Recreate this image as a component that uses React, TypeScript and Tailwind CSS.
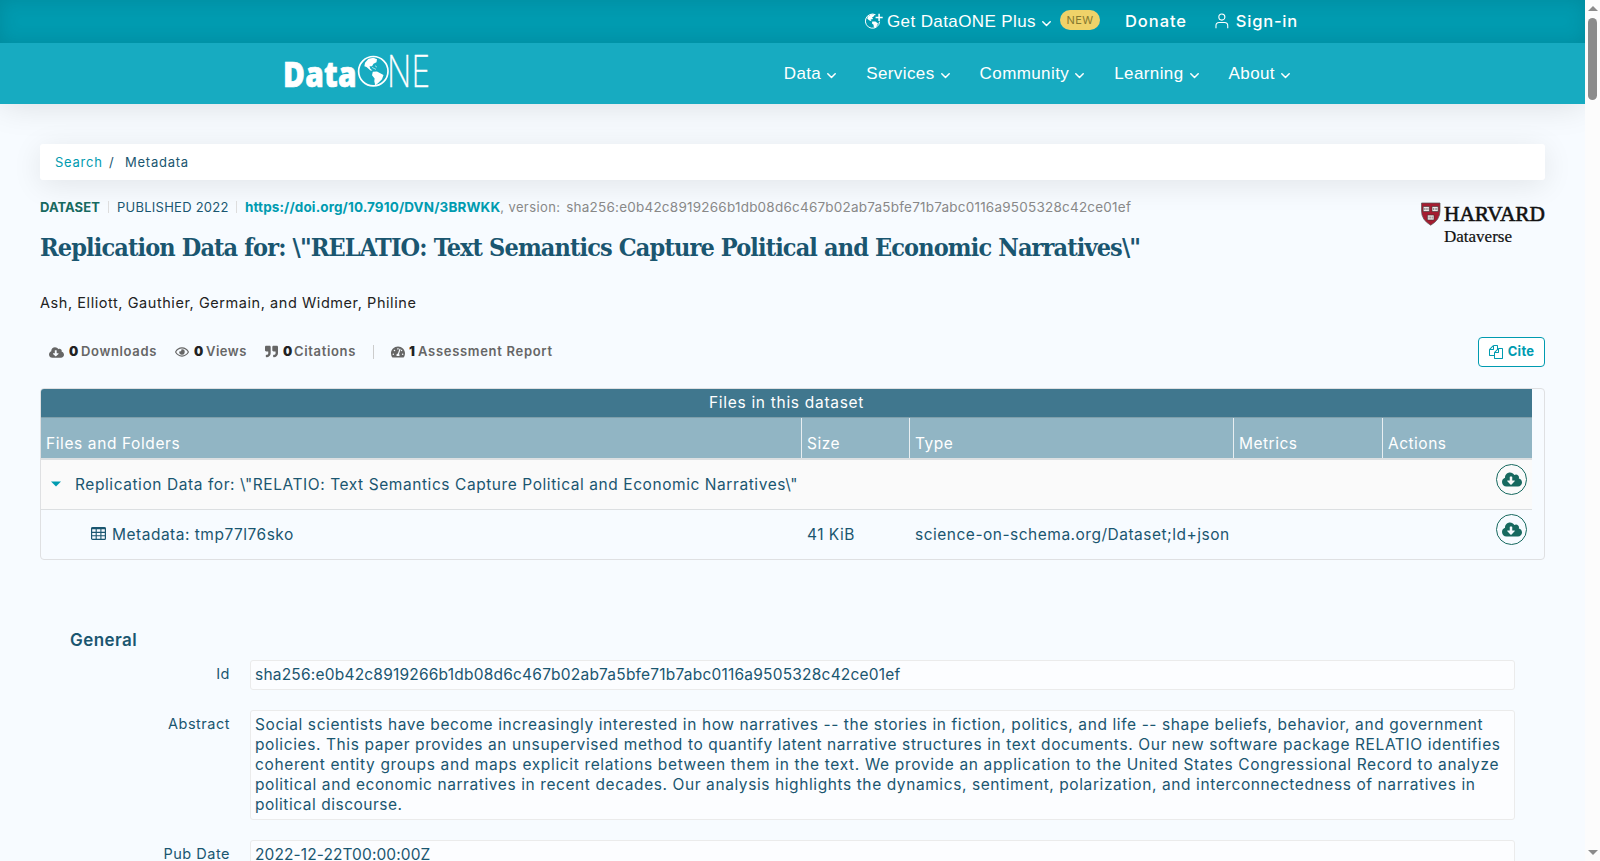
import { ReactNode } from "react";
import clsx from "clsx";
import { FaCloudDownloadAlt, FaQuoteRight, FaRegEye, FaTachometerAlt } from "react-icons/fa";

const navItems = ["Data", "Services", "Community", "Learning", "About"];

const abstractLines = [
  {
    text: "Social scientists have become increasingly interested in how narratives -- the stories in fiction, politics, and life -- shape beliefs, behavior, and government",
    tracking: "tracking-[0.6px]",
  },
  {
    text: "policies. This paper provides an unsupervised method to quantify latent narrative structures in text documents. Our new software package RELATIO identifies",
    tracking: "tracking-[0.6px]",
  },
  {
    text: "coherent entity groups and maps explicit relations between them in the text. We provide an application to the United States Congressional Record to analyze",
    tracking: "tracking-[0.65px]",
  },
  {
    text: "political and economic narratives in recent decades. Our analysis highlights the dynamics, sentiment, polarization, and interconnectedness of narratives in",
    tracking: "tracking-[0.59px]",
  },
  { text: "political discourse.", tracking: "tracking-[0.52px]" },
];

const Chevron = () => (
  <svg viewBox="0 0 9 6" className="mt-1 h-1.5 w-[9px]" fill="none" stroke="currentColor" strokeWidth="1.5">
    <path d="M0.8 0.8 4.5 4.5 8.2 0.8" strokeLinecap="round" strokeLinejoin="round" />
  </svg>
);

const GlobePlus = () => (
  <svg viewBox="0 0 18 17" className="mr-1 h-[17px] w-[18px]">
    <path d="M10.5 1.7A7.1 7.1 0 1 0 14.6 8.6" fill="none" stroke="white" strokeWidth="1" />
    <path d="M3 3.5 6.5 1.3 10 1.5 8.6 3.6 7 4.4 8.2 6 5.6 6.4 6.6 8.2 4 7.3 2.2 5.4Z" fill="white" />
    <path d="M7.2 8.5 10.4 8.6 13 10.6 12 12.6 10 15.2 8.7 13.8 8.6 11.8 7 10.4Z" fill="white" />
    <path d="M14.1 0.8V8M10.6 4.4H17.7" stroke="white" strokeWidth="1.5" />
  </svg>
);

const Person = () => (
  <svg viewBox="0 0 14 16" className="mr-[7px] mb-[2px] h-4 w-[14px]" fill="none" stroke="white" strokeWidth="1.1">
    <circle cx="7" cy="4" r="3.1" />
    <path d="M1 15.4V12.8Q1 9.6 4.2 9.6H9.8Q13 9.6 13 12.8V15.4" />
  </svg>
);

const DataOneLogo = () => (
  <svg viewBox="0 0 144 34" className="h-[34px] w-[144px] overflow-visible" fill="white">
    <text
      x="-2"
      y="31.5"
      textLength="74"
      lengthAdjust="spacingAndGlyphs"
      className="font-['Open_Sans',sans-serif] text-[36px] font-extrabold"
      stroke="white"
      strokeWidth="0.7"
    >
      Data
    </text>
    <circle cx="88.3" cy="16.2" r="14.7" fill="none" stroke="white" strokeWidth="1.7" />
    <path d="M80 7.7 83.5 3.8 88.5 2.7 92 4.2 91.5 7.2 88.5 8.7 87 11.2 84.5 11.2 85.3 13.7 87.5 15.5 85.5 15.5 81.5 11.9 79.4 11.2Z" />
    <path d="M87.8 16.7 92 16.5 98.5 20 97 24.2 93.5 27.8 90.3 30.4 89.3 26.2 89.6 23.6 87 20.2Z" />
    <path d="M87 12.4 91 14.4M90 10.7 92 12.2" fill="none" stroke="white" strokeWidth="0.6" />
    <text
      x="102"
      y="31.5"
      textLength="43.5"
      lengthAdjust="spacingAndGlyphs"
      className="font-['Inter',sans-serif] text-[43px] font-extralight"
      stroke="white"
      strokeWidth="0.3"
    >
      NE
    </text>
  </svg>
);

const HarvardLogo = () => (
  <svg viewBox="0 0 125 44" className="h-11 w-[125px] overflow-visible" fill="#111">
    <path d="M1.5 1H20V9Q20 18 10.7 23.2 1.5 18 1.5 9Z" fill="#a51c30" stroke="#555" strokeWidth="0.7" />
    <path d="M3.2 4.5H9.4V9.5H3.2ZM12 4.5H18.2V9.5H12ZM7.4 13H14V18H7.4Z" fill="#f0e6e6" stroke="#333" strokeWidth="0.6" />
    <path d="M4.7 6V8M6.2 6V8M7.9 6V8M13.5 6V8M15.2 6V8M16.7 6V8M9.1 14.5V16.5M10.7 14.5V16.5M12.3 14.5V16.5" stroke="#555" strokeWidth="0.6" />
    <text x="24" y="19" textLength="101" lengthAdjust="spacingAndGlyphs" className="font-['Liberation_Serif',serif] text-[22px]" stroke="#111" strokeWidth="0.6">
      HARVARD
    </text>
    <text x="24" y="39.5" textLength="68" lengthAdjust="spacingAndGlyphs" className="font-['Liberation_Serif',serif] text-[16.5px]" stroke="#111" strokeWidth="0.2">
      Dataverse
    </text>
  </svg>
);

const CopyIcon = () => (
  <svg viewBox="0 0 1792 1792" className="mr-[5px] size-[14px]" fill="currentColor">
    <path d="M1696 384q40 0 68 28t28 68v1216q0 40-28 68t-68 28h-960q-40 0-68-28t-28-68v-288h-544q-40 0-68-28t-28-68v-672q0-40 20-88t48-76l408-408q28-28 76-48t88-20h416q40 0 68 28t28 68v328q68-40 128-40h416zm-544 213l-299 299h299v-299zm-640-384l-299 299h299v-299zm196 647l316-316v-416h-384v416q0 40-28 68t-68 28h-416v640h512v-256q0-40 20-88t48-76zm956 804v-1152h-384v416q0 40-28 68t-68 28h-416v640h896z" />
  </svg>
);

const TableIcon = () => (
  <svg viewBox="0 0 15 13" className="mr-[6px] mb-[2px] h-[13px] w-[15px]" fill="none" stroke="currentColor">
    <rect x="0.6" y="0.6" width="13.8" height="11.8" rx="1" strokeWidth="1.2" />
    <path d="M0.5 1.4H14.5" strokeWidth="1.8" />
    <path d="M0.5 5.4H14.5M0.5 8.8H14.5M5.2 2V12.5M9.9 2V12.5" strokeWidth="1.1" />
  </svg>
);

const DownloadButton = () => (
  <button className="mr-[5px] mt-[4px] ml-auto flex size-[31px] items-center justify-center self-start rounded-full border border-[#17695f] text-[#17695f]">
    <FaCloudDownloadAlt className="mb-px h-[17px] w-[20px]" />
  </button>
);

const Field = ({ label, height, children }: { label: string; height: string; children: ReactNode }) => (
  <div className="mb-5 flex">
    <div className="mr-5 w-[190px] pt-1 text-right text-[14.5px] leading-5 tracking-[0.5px]">{label}</div>
    <div className={clsx("w-[1265px] rounded-[3px] border border-[#ebebeb] bg-[#fcfdff] py-1 pl-1 text-[15.5px] leading-5 whitespace-nowrap", height)}>
      {children}
    </div>
  </div>
);

const Header = () => (
  <header className="font-['Liberation_Sans',sans-serif] text-[17px] tracking-[0.4px] text-white shadow-[0_0_35px_rgba(0,0,0,0.13)]">
    <div className="flex h-[43px] items-center bg-[#009bb0] pr-[287px] shadow-[inset_0_0_18px_rgba(0,60,70,0.18)]">
      <div className="ml-auto flex items-center">
        <GlobePlus />
        <span className="mr-[6px]">Get DataONE Plus</span>
        <Chevron />
      </div>
      <span className="mr-[25px] mb-[3px] ml-[9px] flex h-5 w-10 items-center justify-center rounded-full bg-[#efd269] font-[Inter,sans-serif] text-[11px] tracking-[0.4px] text-[#85782f]">
        NEW
      </span>
      <span className="mr-[28px] w-[62px] font-[Inter,sans-serif] text-[16.5px] font-medium tracking-[0.95px]">Donate</span>
      <div className="flex w-[83px] items-center font-[Inter,sans-serif] text-[16.5px] font-medium whitespace-nowrap">
        <Person />
        <span className="tracking-[0.8px]">Sign-in</span>
      </div>
    </div>
    <div className="flex h-[61px] items-center bg-[#17abc1] pr-[295px] pl-[285px]">
      <div className="mb-[4px]">
        <DataOneLogo />
      </div>
      <nav className="ml-auto flex gap-[30px]">
        {navItems.map((item) => (
          <div key={item} className="flex items-center gap-[6px]">
            <span>{item}</span>
            <Chevron />
          </div>
        ))}
      </nav>
    </div>
  </header>
);

const Metrics = () => (
  <div className="flex items-center text-[13px] font-semibold text-[#666]">
    <FaCloudDownloadAlt className="ml-[9px] size-[15px]" />
    <b className="ml-[5px] w-3 text-[#222]">0</b>
    <span className="w-[94px] tracking-[0.65px]">Downloads</span>
    <FaRegEye className="size-[14px]" />
    <b className="ml-[5px] w-3 text-[#222]">0</b>
    <span className="w-[59px] tracking-[0.5px]">Views</span>
    <FaQuoteRight className="mb-[2px] size-[13px]" />
    <b className="ml-[5px] w-[11px] text-[#222]">0</b>
    <span className="w-[79px] tracking-[0.65px]">Citations</span>
    <span className="h-[14px] w-px bg-[#ccc]" />
    <FaTachometerAlt className="ml-[17px] size-[14px]" />
    <b className="ml-[4px] w-[9px] text-[#222]">1</b>
    <span className="tracking-[0.7px]">Assessment Report</span>
  </div>
);

const FileTable = () => (
  <div className="mt-[21px] h-[172px] overflow-hidden rounded border border-[#dfe0e2] pr-3 text-[15.5px] tracking-[0.5px]">
    <div className="flex h-7 items-center justify-center bg-[#40778e] tracking-[0.7px] text-white">Files in this dataset</div>
    <div className="flex h-[43px] border-t border-b-2 border-t-[#7f9fab] border-b-[#dcdfe1] bg-[#91b5c4] leading-[52px] text-white">
      <div className="w-[760px] pl-[5px] tracking-[0.6px]">Files and Folders</div>
      <div className="w-[108px] border-l border-[#e8eef1] pl-[5px]">Size</div>
      <div className="w-[324px] border-l border-[#e8eef1] pl-[5px]">Type</div>
      <div className="w-[149px] border-l border-[#e8eef1] pl-[5px]">Metrics</div>
      <div className="flex-1 border-l border-[#e8eef1] pl-[5px]">Actions</div>
    </div>
    <div className="flex h-[50px] items-center border-b border-[#dcdfe1] bg-[#fafafa]">
      <svg viewBox="0 0 10 6" className="mb-px ml-[10px] h-1.5 w-[10px]" fill="#009bb0">
        <path d="M0 0.5H10L5 5.5Z" />
      </svg>
      <span className="ml-[14px] tracking-[0.57px]">
        Replication Data for: \"RELATIO: Text Semantics Capture Political and Economic Narratives\"
      </span>
      <DownloadButton />
    </div>
    <div className="flex h-[49px] items-center">
      <div className="flex w-[766px] items-center pl-[50px]">
        <TableIcon />
        Metadata: tmp77l76sko
      </div>
      <div className="w-[108px]">41 KiB</div>
      <div>science-on-schema.org/Dataset;ld+json</div>
      <DownloadButton />
    </div>
  </div>
);

export default function App() {
  return (
    <div className="flex h-[861px] w-[1600px] overflow-hidden bg-[#f7fbff] font-[Inter,sans-serif] text-[#1a5670]">
      <div className="w-[1585px] overflow-hidden">
        <Header />
        <main className="px-10 pt-10">
          <div className="flex h-9 items-center rounded-[3px] bg-white pt-[2px] pl-[15px] text-[13px] tracking-[0.75px] shadow-[0_5px_30px_rgba(0,0,0,0.09)]">
            <span className="w-[54px] text-[#009bb0]">Search</span>
            <span className="w-4">/</span>
            <span>Metadata</span>
          </div>

          <div className="flex h-[157px] justify-between">
            <div>
              <div className="mt-[17px] flex h-5 items-center text-[13.5px] whitespace-nowrap">
                <b className="w-[68px] pt-px text-[13px] tracking-[0.05px] text-[#17695f]">DATASET</b>
                <span className="h-3 w-px bg-[#ddd]" />
                <span className="w-[127px] pt-px pl-2 text-[13px] tracking-[0.25px]">PUBLISHED 2022</span>
                <span className="h-3 w-px bg-[#ddd]" />
                <b className="ml-2 tracking-[0.12px] text-[#009bb0]">https://doi.org/10.7910/DVN/3BRWKK</b>
                <span className="w-[66px] pt-px text-[13px] tracking-[0.4px] text-[#888]">, version:</span>
                <span className="tracking-[0.22px] text-[#888]">sha256:e0b42c8919266b1db08d6c467b02ab7a5bfe71b7abc0116a9505328c42ce01ef</span>
              </div>
              <h1 className="mt-[13px] font-['DejaVu_Serif',serif] text-[25px] leading-9 font-bold tracking-[-0.87px] whitespace-nowrap [font-stretch:condensed]">
                Replication Data for: \"RELATIO: Text Semantics Capture Political and Economic Narratives\"
              </h1>
              <p className="mt-[27px] text-[14.5px] leading-5 tracking-[0.56px] text-[#222]">
                Ash, Elliott, Gauthier, Germain, and Widmer, Philine
              </p>
            </div>
            <div className="pt-[22px]">
              <HarvardLogo />
            </div>
          </div>

          <div className="flex h-[30px] items-center justify-between">
            <Metrics />
            <button className="flex h-[30px] w-[67px] items-center justify-center rounded border border-[#009bb0] bg-white text-[13px] font-bold tracking-[0.3px] text-[#009bb0]">
              <CopyIcon />
              Cite
            </button>
          </div>

          <FileTable />

          <section className="pt-[68px]">
            <h2 className="h-8 pl-[30px] text-[17px] leading-6 font-semibold tracking-[0.45px]">General</h2>
            <Field label="Id" height="h-[30px]">
              <span className="tracking-[0.21px]">sha256:e0b42c8919266b1db08d6c467b02ab7a5bfe71b7abc0116a9505328c42ce01ef</span>
            </Field>
            <Field label="Abstract" height="h-[110px]">
              {abstractLines.map((line) => (
                <div key={line.text} className={line.tracking}>
                  {line.text}
                </div>
              ))}
            </Field>
            <Field label="Pub Date" height="h-[30px]">
              <span className="tracking-[0.1px]">2022-12-22T00:00:00Z</span>
            </Field>
          </section>
        </main>
      </div>

      <div className="flex w-[15px] flex-col items-center justify-between bg-[#fcfcfc] py-1.5">
        <div className="flex flex-col items-center gap-[7px]">
          <svg viewBox="0 0 10 5" className="h-[5px] w-[10px]" fill="#8b8b8b">
            <path d="M0 5 5 0 10 5Z" />
          </svg>
          <div className="h-[82px] w-[9px] rounded-full bg-[#8b8b8b]" />
        </div>
        <svg viewBox="0 0 10 5" className="h-[5px] w-[10px]" fill="#8b8b8b">
          <path d="M0 0H10L5 5Z" />
        </svg>
      </div>
    </div>
  );
}
